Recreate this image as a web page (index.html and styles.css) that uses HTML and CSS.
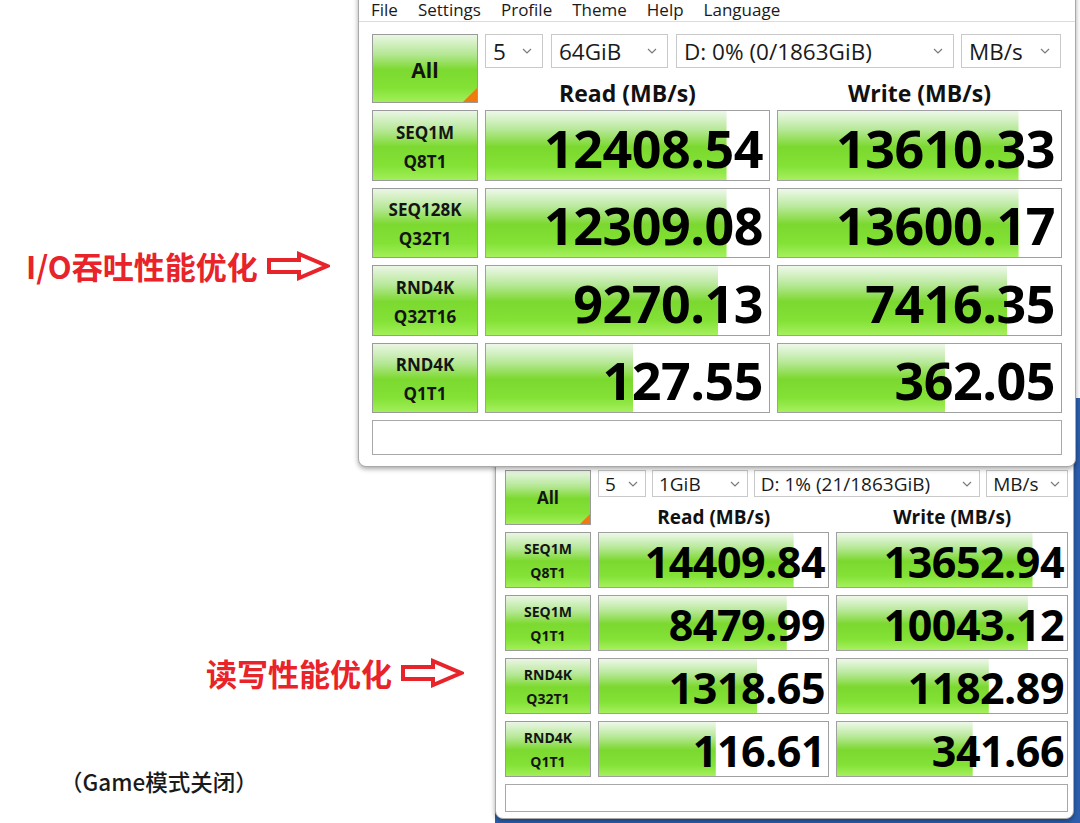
FILE: index.html
```html
<!DOCTYPE html>
<html lang="zh-CN">
<head>
    <meta charset="UTF-8">
    <title>CrystalDiskMark 对比</title>
    <link rel="stylesheet" href="styles.css">
</head>
<body>
    <div class="canvas">
        <div class="desktop"></div>

        <!-- second run: read/write tuning -->
        <div class="win win2">
            <div class="panel">
                <div class="btn-all">All</div>
                <div class="top">
                    <div class="selects">
                        <div class="select s-count">5<svg viewBox="0 0 10 6"><polyline points="1,1 5,5 9,1"/></svg></div>
                        <div class="select s-size">1GiB<svg viewBox="0 0 10 6"><polyline points="1,1 5,5 9,1"/></svg></div>
                        <div class="select s-drive">D: 1% (21/1863GiB)<svg viewBox="0 0 10 6"><polyline points="1,1 5,5 9,1"/></svg></div>
                        <div class="select s-unit">MB/s<svg viewBox="0 0 10 6"><polyline points="1,1 5,5 9,1"/></svg></div>
                    </div>
                    <div class="heads">
                        <div>Read (MB/s)</div>
                        <div>Write (MB/s)</div>
                    </div>
                </div>

                <div class="label">SEQ1M<br>Q8T1</div>
                <div class="bar" style="--fill:85%">14409.84</div>
                <div class="bar" style="--fill:85%">13652.94</div>

                <div class="label">SEQ1M<br>Q1T1</div>
                <div class="bar" style="--fill:82%">8479.99</div>
                <div class="bar" style="--fill:83%">10043.12</div>

                <div class="label">RND4K<br>Q32T1</div>
                <div class="bar" style="--fill:69%">1318.65</div>
                <div class="bar" style="--fill:66%">1182.89</div>

                <div class="label">RND4K<br>Q1T1</div>
                <div class="bar" style="--fill:51%">116.61</div>
                <div class="bar" style="--fill:59%">341.66</div>

                <div class="status"></div>
            </div>
        </div>

        <!-- first run: I/O throughput tuning -->
        <div class="win win1">
            <div class="menubar">
                <span>File</span>
                <span>Settings</span>
                <span>Profile</span>
                <span>Theme</span>
                <span>Help</span>
                <span>Language</span>
            </div>
            <div class="panel">
                <div class="btn-all">All</div>
                <div class="top">
                    <div class="selects">
                        <div class="select s-count">5<svg viewBox="0 0 10 6"><polyline points="1,1 5,5 9,1"/></svg></div>
                        <div class="select s-size">64GiB<svg viewBox="0 0 10 6"><polyline points="1,1 5,5 9,1"/></svg></div>
                        <div class="select s-drive">D: 0% (0/1863GiB)<svg viewBox="0 0 10 6"><polyline points="1,1 5,5 9,1"/></svg></div>
                        <div class="select s-unit">MB/s<svg viewBox="0 0 10 6"><polyline points="1,1 5,5 9,1"/></svg></div>
                    </div>
                    <div class="heads">
                        <div>Read (MB/s)</div>
                        <div>Write (MB/s)</div>
                    </div>
                </div>

                <div class="label">SEQ1M<br>Q8T1</div>
                <div class="bar" style="--fill:85%">12408.54</div>
                <div class="bar" style="--fill:85%">13610.33</div>

                <div class="label">SEQ128K<br>Q32T1</div>
                <div class="bar" style="--fill:85%">12309.08</div>
                <div class="bar" style="--fill:85%">13600.17</div>

                <div class="label">RND4K<br>Q32T16</div>
                <div class="bar" style="--fill:82%">9270.13</div>
                <div class="bar" style="--fill:81%">7416.35</div>

                <div class="label">RND4K<br>Q1T1</div>
                <div class="bar" style="--fill:52%">127.55</div>
                <div class="bar" style="--fill:59%">362.05</div>

                <div class="status"></div>
            </div>
        </div>

        <div class="note note-io">
            <span>I/O吞吐性能优化</span>
            <svg class="arrow" viewBox="0 0 64 30"><path d="M3 9 H33 V3 L61 15 L33 27 V21 H3 Z"/></svg>
        </div>

        <div class="note note-rw">
            <span>读写性能优化</span>
            <svg class="arrow" viewBox="0 0 64 30"><path d="M3 9 H33 V3 L61 15 L33 27 V21 H3 Z"/></svg>
        </div>

        <div class="caption">（Game模式关闭）</div>
    </div>
</body>
</html>
```

FILE: styles.css
```css
body {
    margin: 0;
    background: #ffffff;
    font-family: 'Open Sans', 'Noto Sans', 'Noto Sans CJK SC', sans-serif;
    color: #111111;
}
.canvas {
    position: relative;
    width: 1080px;
    height: 823px;
    overflow: hidden;
}

/* desktop peeking out around the windows */
.desktop {
    position: absolute;
    left: 495px;
    top: 398px;
    width: 585px;
    height: 425px;
    background: #2b5fae;
}

/* window frames */
.win {
    position: absolute;
    background: #ffffff;
    border: 1px solid #a9a9a9;
    border-radius: 0 0 8px 8px;
    box-shadow: 0 2px 5px rgba(0, 0, 0, 0.35);
}
.win1 {
    left: 358px;
    top: -12px;
    width: 716px;
}
.win2 {
    left: 495px;
    top: 439px;
    width: 579px;
    height: 380px;
    box-sizing: border-box;
}

.menubar {
    box-sizing: border-box;
    height: 33px;
    display: flex;
    align-items: flex-end;
    gap: 20px;
    padding: 0 0 3px 12px;
    border-bottom: 1px solid #dcdcdc;
    font-size: 17px;
    color: #1a1a1a;
}
.menubar span {
    display: inline-block;
    line-height: 17px;
}

/* benchmark grid */
.panel {
    display: grid;
    column-gap: 7px;
    row-gap: 7px;
}
.win1 .panel {
    grid-template-columns: 106px 285px 285px;
    grid-template-rows: 69px repeat(4, 70.5px) 35px;
    padding: 12px 13px 11px 13px;
}
.win2 .panel {
    grid-template-columns: 86px 231px 232px;
    grid-template-rows: 55px repeat(4, 56px) 28px;
    padding: 30px 7px 6px 9px;
}

.btn-all,
.label {
    box-sizing: border-box;
    border: 1px solid #9a9a9a;
    background: linear-gradient(to bottom, #eaf6e4 0%, #b6e897 28%, #7cd92f 52%, #84e237 80%, #a2ef58 100%);
    display: flex;
    align-items: center;
    justify-content: center;
    text-align: center;
    font-weight: 700;
    color: #141414;
}
.btn-all {
    position: relative;
}
.btn-all::after {
    content: '';
    position: absolute;
    right: 0;
    bottom: 0;
    border-style: solid;
    border-color: transparent #f07a10 #f07a10 transparent;
}
.win1 .btn-all {
    font-size: 21px;
    padding-top: 2px;
}
.win1 .btn-all::after {
    border-width: 7px;
}
.win2 .btn-all {
    font-size: 17px;
}
.win2 .btn-all::after {
    border-width: 5px;
}

.win1 .label {
    font-size: 17px;
    line-height: 29px;
    padding-top: 3px;
}
.win2 .label {
    font-size: 14px;
    line-height: 24px;
    padding-top: 1px;
}

.top {
    grid-column: 2 / 4;
    display: flex;
    flex-direction: column;
}
.selects {
    display: flex;
    gap: 8px;
}
.select {
    box-sizing: border-box;
    display: flex;
    align-items: center;
    justify-content: space-between;
    background: #ffffff;
    border: 1px solid #c9c9c9;
    color: #1a1a1a;
    white-space: nowrap;
}
.select svg {
    width: 10px;
    height: 6px;
    flex: none;
    fill: none;
    stroke: #7a7a7a;
    stroke-width: 1.2;
}
.win1 .select {
    height: 34px;
    padding: 0 10px 0 7px;
    font-size: 22.5px;
}
.win1 .s-count { width: 58px; }
.win1 .s-size { width: 117px; }
.win1 .s-drive { width: 278px; }
.win1 .s-unit { width: 100px; margin-left: -1px; }

.win2 .selects {
    gap: 6px;
}
.win2 .select {
    height: 27px;
    padding: 0 7px 0 6px;
    font-size: 19px;
}
.win2 .s-count { width: 48px; }
.win2 .s-size { width: 96px; }
.win2 .s-drive { width: 227px; }
.win2 .s-unit { width: 82px; }

.heads {
    flex: 1;
    display: grid;
    grid-template-columns: 1fr 1fr;
    column-gap: 7px;
    align-items: end;
    text-align: center;
    font-weight: 700;
}
.win1 .heads {
    font-size: 23px;
    line-height: 20px;
}
.win2 .heads {
    font-size: 19px;
    line-height: 16px;
}

.bar {
    box-sizing: border-box;
    border: 1px solid #a0a0a0;
    background: linear-gradient(to bottom, #eef8ea 0%, #b9e99c 26%, #7bd82e 52%, #84e237 80%, #a6f05e 100%) left top / var(--fill) 100% no-repeat, #ffffff;
    display: flex;
    align-items: center;
    justify-content: flex-end;
    font-weight: 700;
    color: #000000;
}
.win1 .bar {
    font-size: 52px;
    letter-spacing: -0.5px;
    padding: 4px 6px 0 0;
}
.win2 .bar {
    font-size: 43px;
    letter-spacing: -0.5px;
    padding: 3px 3px 0 0;
}

.status {
    grid-column: 1 / 4;
    box-sizing: border-box;
    border: 1px solid #a8a8a8;
    background: #ffffff;
}

/* red annotations */
.note {
    position: absolute;
    display: flex;
    align-items: center;
    gap: 8px;
    color: #e8232a;
    font-family: 'Noto Sans CJK SC', 'Noto Sans', sans-serif;
    font-weight: 700;
    font-size: 31px;
    line-height: 36px;
}
.note-io {
    left: 26px;
    top: 248px;
}
.note-rw {
    left: 206px;
    top: 655px;
}
.arrow {
    width: 64px;
    height: 30px;
    fill: none;
    stroke: #e8232a;
    stroke-width: 4;
}

.caption {
    position: absolute;
    left: 60px;
    top: 766px;
    font-family: 'Noto Sans CJK SC', 'Noto Sans', sans-serif;
    font-weight: 500;
    font-size: 22.5px;
    line-height: 30px;
    color: #1a1a1a;
}
```
